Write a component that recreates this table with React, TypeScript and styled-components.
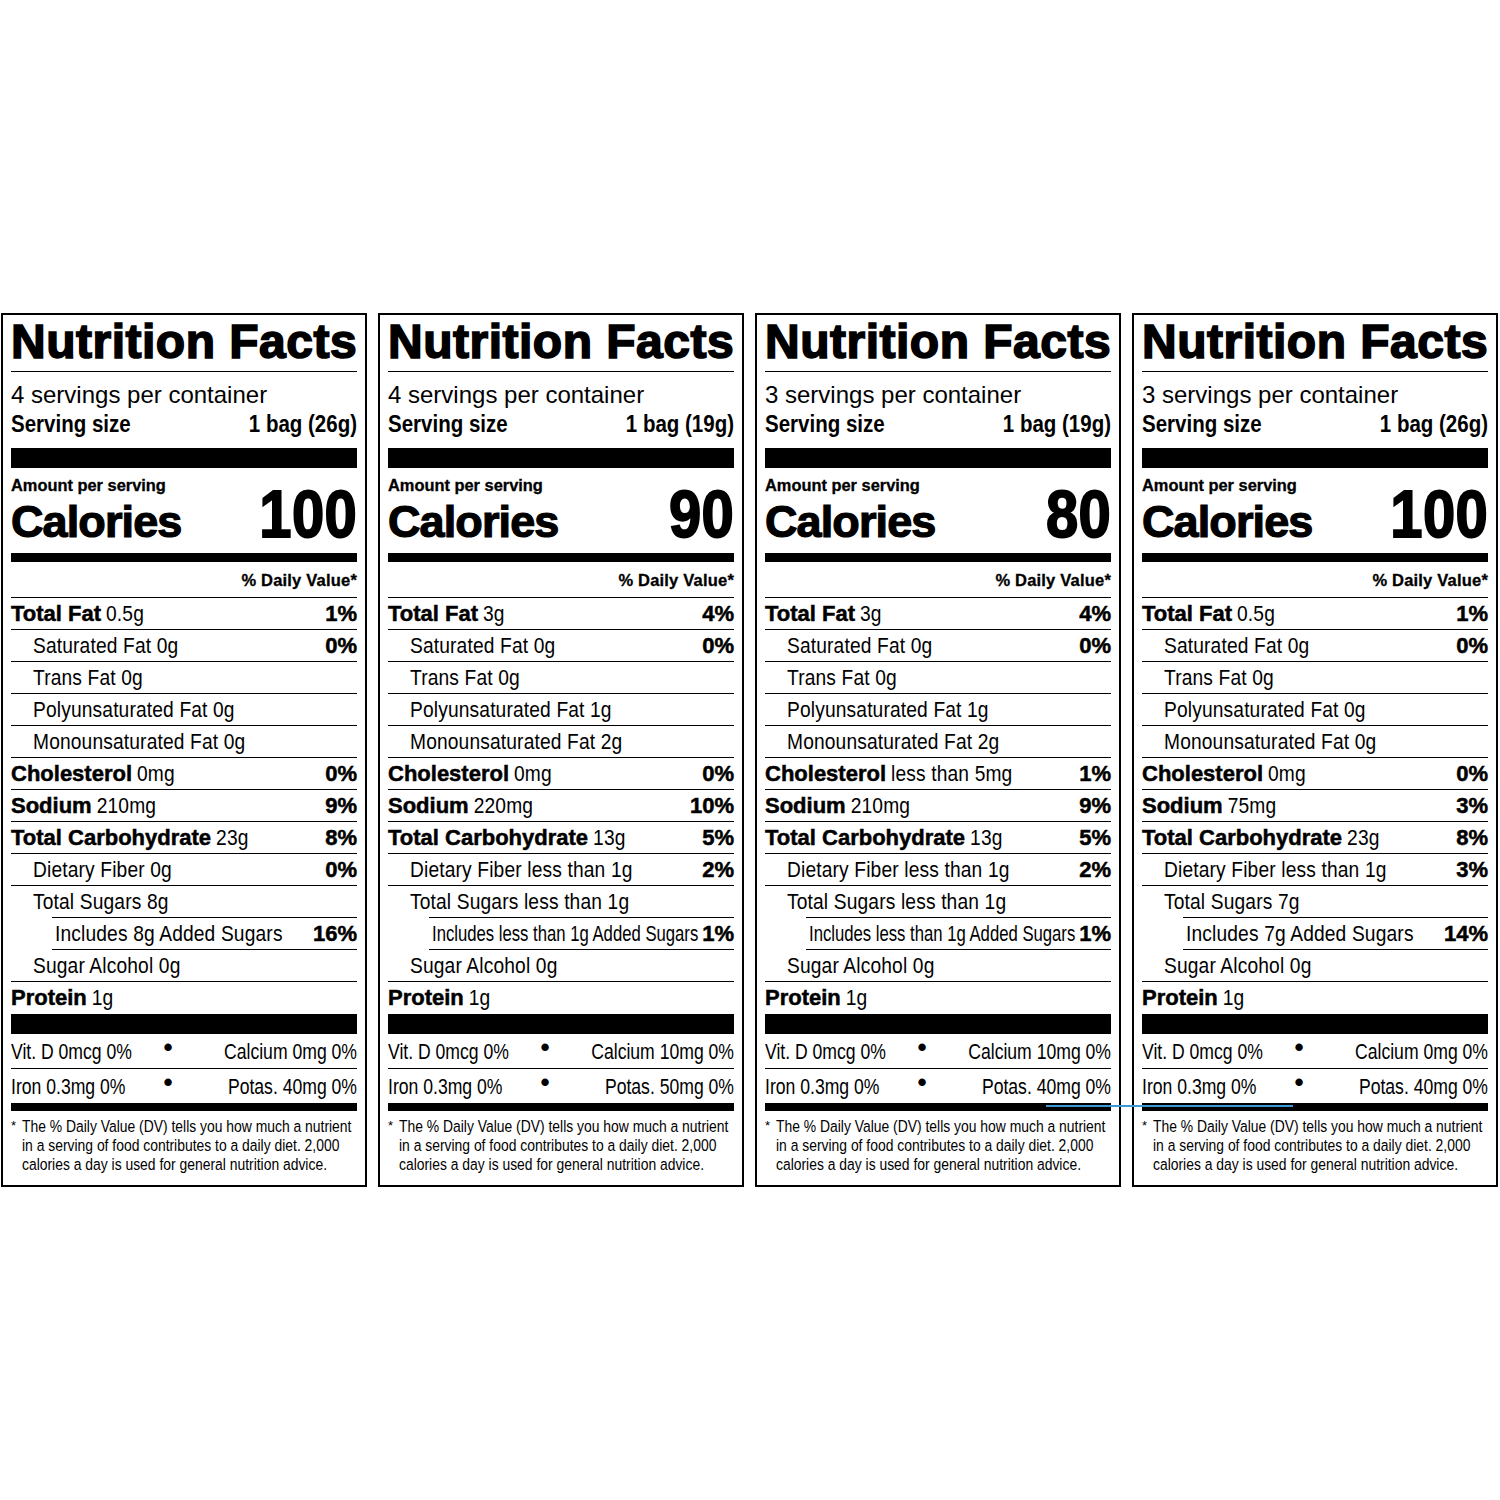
import React from "react";
import styled, { createGlobalStyle, css } from "styled-components";

const SANS = `"Liberation Sans", Arial, Helvetica, sans-serif`;

const GlobalStyle = createGlobalStyle`
  html, body { margin: 0; padding: 0; background: #fff; }
  body { font-family: ${SANS}; color: #000; }
`;

/* Condensed look: Liberation Sans at a size that gives the reference widths,
   stretched vertically around its baseline to the reference cap height. */
const tall = (scale: number) => css`
  display: inline-block;
  line-height: 1;
  transform: scaleY(${scale});
  transform-origin: 0 84.65%;
`;

const Page = styled.main`
  min-height: 1500px;
  display: flex;
  align-items: center;
`;

const Strip = styled.div`
  position: relative;
  display: flex;
  gap: 11px;
  padding-left: 1px;
`;

const Label = styled.section`
  width: 366px;
  box-sizing: border-box;
  border: 2px solid #000;
  padding: 0 8px;
  display: flex;
  flex-direction: column;
`;

const Title = styled.h1`
  margin: 0;
  padding: 1px 0 3px;
  font: 700 48px/52px ${SANS};
  letter-spacing: 0.5px;
  -webkit-text-stroke: 1.6px #000;
  white-space: nowrap;
  border-bottom: 1px solid #000;
`;

const Servings = styled.div`
  padding-top: 9px;
  font: 400 24px/28px ${SANS};
  white-space: nowrap;
`;

const ServingSize = styled.div`
  margin-top: 3px;
  height: 28px;
  display: flex;
  justify-content: space-between;
  align-items: center;
  white-space: nowrap;
`;

const ServingText = styled.span`
  font: 700 20.5px ${SANS};
  ${tall(1.17)};
`;

const Bar = styled.div<{ $h: number; $mt?: number }>`
  height: ${(p) => p.$h}px;
  margin-top: ${(p) => p.$mt ?? 0}px;
  background: #000;
`;

const CalBlock = styled.div`
  padding-top: 8px;
  display: flex;
  justify-content: space-between;
  align-items: last baseline;
`;

const CalLeft = styled.div`
  display: flex;
  flex-direction: column;
`;

const Amount = styled.div`
  font: 700 16.4px/18px ${SANS};
  -webkit-text-stroke: 0.3px #000;
`;

const Calories = styled.div`
  margin-top: 6px;
  font: 700 45px/44px ${SANS};
  letter-spacing: -0.9px;
  -webkit-text-stroke: 1.2px #000;
`;

const CalNum = styled.div`
  font: 700 58px/52px ${SANS};
  letter-spacing: 0.3px;
  -webkit-text-stroke: 1.6px #000;
  transform: scaleY(1.15);
  transform-origin: 100% 46px;
`;

const DVHeader = styled.div`
  padding: 8px 0 7px;
  text-align: right;
  font: 700 16.5px/20px ${SANS};
  letter-spacing: 0.2px;
  -webkit-text-stroke: 0.3px #000;
  border-bottom: 1px solid #000;
`;

type Kind = "main" | "sub" | "sugars" | "added" | "protein";

const Row = styled.div<{ $kind: Kind }>`
  display: flex;
  justify-content: space-between;
  align-items: baseline;
  height: 31px;
  line-height: 31px;
  white-space: nowrap;
  padding-left: ${(p) => (p.$kind === "sub" || p.$kind === "sugars" ? 22 : p.$kind === "added" ? 3 : 0)}px;
  margin-left: ${(p) => (p.$kind === "added" ? 41 : 0)}px;
  border-top: ${(p) => (p.$kind === "added" ? "1px solid #000" : "none")};
  border-bottom: ${(p) => (p.$kind === "sugars" || p.$kind === "protein" ? "none" : "1px solid #000")};
  padding-bottom: ${(p) => (p.$kind === "protein" ? 1 : 0)}px;
`;

const RowText = styled.span`
  font: 700 22px/31px ${SANS};
`;

const RowLabel = styled.span`
  margin-right: 5px;
  -webkit-text-stroke: 0.5px #000;
`;

const RowValue = styled.span<{ $tight?: boolean }>`
  font: 400 ${(p) => (p.$tight ? 16.7 : 19.2)}px ${SANS};
  letter-spacing: ${(p) => (p.$tight ? 0 : 0.15)}px;
  ${(p) => tall(p.$tight ? 1.3 : 1.15)};
`;

const RowPct = styled.span`
  padding-left: 4px;
  font: 700 22px/31px ${SANS};
  -webkit-text-stroke: 0.5px #000;
`;

const VitRow = styled.div<{ $rule?: boolean }>`
  display: grid;
  grid-template-columns: 1fr auto 1fr;
  align-items: baseline;
  height: 34px;
  white-space: nowrap;
  border-bottom: ${(p) => (p.$rule ? "1px solid #000" : "none")};
`;

const VitText = styled.span<{ $end?: boolean }>`
  justify-self: ${(p) => (p.$end ? "end" : "start")};
  font: 400 17.6px ${SANS};
  ${tall(1.3)};
`;

const Bullet = styled.span`
  margin-right: 32px;
  font: 700 26px/32px ${SANS};
  transform: translateY(-3px);
`;

const Footnote = styled.div`
  padding: 6px 0 20px;
  display: flex;
  align-items: flex-start;
`;

const Star = styled.span`
  flex: 0 0 11px;
  font: 400 13px/17px ${SANS};
`;

const FootText = styled.p`
  margin: 0;
  white-space: nowrap;
  font: 400 13.9px/16.24px ${SANS};
  transform: scaleY(1.17);
  transform-origin: 0 0;
`;

const Glitch = styled.div`
  position: absolute;
  left: 1046px;
  top: 792px;
  width: 247px;
  height: 2px;
  background: #3a98d4;
`;

type Nutrient = {
  kind: Kind;
  label?: string;
  value: string;
  pct?: string;
  tight?: boolean;
};

type Facts = {
  servings: string;
  size: string;
  calories: string;
  rows: Nutrient[];
  vitD: string;
  calcium: string;
  iron: string;
  potas: string;
};

const labels: Facts[] = [
  {
    servings: "4 servings per container",
    size: "1 bag (26g)",
    calories: "100",
    rows: [
      { kind: "main", label: "Total Fat", value: "0.5g", pct: "1%" },
      { kind: "sub", value: "Saturated Fat 0g", pct: "0%" },
      { kind: "sub", value: "Trans Fat 0g" },
      { kind: "sub", value: "Polyunsaturated Fat 0g" },
      { kind: "sub", value: "Monounsaturated Fat 0g" },
      { kind: "main", label: "Cholesterol", value: "0mg", pct: "0%" },
      { kind: "main", label: "Sodium", value: "210mg", pct: "9%" },
      { kind: "main", label: "Total Carbohydrate", value: "23g", pct: "8%" },
      { kind: "sub", value: "Dietary Fiber 0g", pct: "0%" },
      { kind: "sugars", value: "Total Sugars 8g" },
      { kind: "added", value: "Includes 8g Added Sugars", pct: "16%" },
      { kind: "sub", value: "Sugar Alcohol 0g" },
      { kind: "protein", label: "Protein", value: "1g" },
    ],
    vitD: "Vit. D 0mcg 0%",
    calcium: "Calcium 0mg 0%",
    iron: "Iron 0.3mg 0%",
    potas: "Potas. 40mg 0%",
  },
  {
    servings: "4 servings per container",
    size: "1 bag (19g)",
    calories: "90",
    rows: [
      { kind: "main", label: "Total Fat", value: "3g", pct: "4%" },
      { kind: "sub", value: "Saturated Fat 0g", pct: "0%" },
      { kind: "sub", value: "Trans Fat 0g" },
      { kind: "sub", value: "Polyunsaturated Fat 1g" },
      { kind: "sub", value: "Monounsaturated Fat 2g" },
      { kind: "main", label: "Cholesterol", value: "0mg", pct: "0%" },
      { kind: "main", label: "Sodium", value: "220mg", pct: "10%" },
      { kind: "main", label: "Total Carbohydrate", value: "13g", pct: "5%" },
      { kind: "sub", value: "Dietary Fiber less than 1g", pct: "2%" },
      { kind: "sugars", value: "Total Sugars less than 1g" },
      { kind: "added", value: "Includes less than 1g Added Sugars", pct: "1%", tight: true },
      { kind: "sub", value: "Sugar Alcohol 0g" },
      { kind: "protein", label: "Protein", value: "1g" },
    ],
    vitD: "Vit. D 0mcg 0%",
    calcium: "Calcium 10mg 0%",
    iron: "Iron 0.3mg 0%",
    potas: "Potas. 50mg 0%",
  },
  {
    servings: "3 servings per container",
    size: "1 bag (19g)",
    calories: "80",
    rows: [
      { kind: "main", label: "Total Fat", value: "3g", pct: "4%" },
      { kind: "sub", value: "Saturated Fat 0g", pct: "0%" },
      { kind: "sub", value: "Trans Fat 0g" },
      { kind: "sub", value: "Polyunsaturated Fat 1g" },
      { kind: "sub", value: "Monounsaturated Fat 2g" },
      { kind: "main", label: "Cholesterol", value: "less than 5mg", pct: "1%" },
      { kind: "main", label: "Sodium", value: "210mg", pct: "9%" },
      { kind: "main", label: "Total Carbohydrate", value: "13g", pct: "5%" },
      { kind: "sub", value: "Dietary Fiber less than 1g", pct: "2%" },
      { kind: "sugars", value: "Total Sugars less than 1g" },
      { kind: "added", value: "Includes less than 1g Added Sugars", pct: "1%", tight: true },
      { kind: "sub", value: "Sugar Alcohol 0g" },
      { kind: "protein", label: "Protein", value: "1g" },
    ],
    vitD: "Vit. D 0mcg 0%",
    calcium: "Calcium 10mg 0%",
    iron: "Iron 0.3mg 0%",
    potas: "Potas. 40mg 0%",
  },
  {
    servings: "3 servings per container",
    size: "1 bag (26g)",
    calories: "100",
    rows: [
      { kind: "main", label: "Total Fat", value: "0.5g", pct: "1%" },
      { kind: "sub", value: "Saturated Fat 0g", pct: "0%" },
      { kind: "sub", value: "Trans Fat 0g" },
      { kind: "sub", value: "Polyunsaturated Fat 0g" },
      { kind: "sub", value: "Monounsaturated Fat 0g" },
      { kind: "main", label: "Cholesterol", value: "0mg", pct: "0%" },
      { kind: "main", label: "Sodium", value: "75mg", pct: "3%" },
      { kind: "main", label: "Total Carbohydrate", value: "23g", pct: "8%" },
      { kind: "sub", value: "Dietary Fiber less than 1g", pct: "3%" },
      { kind: "sugars", value: "Total Sugars 7g" },
      { kind: "added", value: "Includes 7g Added Sugars", pct: "14%" },
      { kind: "sub", value: "Sugar Alcohol 0g" },
      { kind: "protein", label: "Protein", value: "1g" },
    ],
    vitD: "Vit. D 0mcg 0%",
    calcium: "Calcium 0mg 0%",
    iron: "Iron 0.3mg 0%",
    potas: "Potas. 40mg 0%",
  },
];

function NutritionLabel({ f }: { f: Facts }) {
  return (
    <Label>
      <Title>Nutrition Facts</Title>
      <Servings>{f.servings}</Servings>
      <ServingSize>
        <ServingText>Serving size</ServingText>
        <ServingText>{f.size}</ServingText>
      </ServingSize>
      <Bar $h={20} $mt={8} />
      <CalBlock>
        <CalLeft>
          <Amount>Amount per serving</Amount>
          <Calories>Calories</Calories>
        </CalLeft>
        <CalNum>{f.calories}</CalNum>
      </CalBlock>
      <Bar $h={9} $mt={9} />
      <DVHeader>% Daily Value*</DVHeader>
      {f.rows.map((r, i) => (
        <Row key={i} $kind={r.kind}>
          <RowText>
            {r.label && <RowLabel>{r.label}</RowLabel>}
            <RowValue $tight={r.tight}>{r.value}</RowValue>
          </RowText>
          {r.pct && <RowPct>{r.pct}</RowPct>}
        </Row>
      ))}
      <Bar $h={20} />
      <VitRow $rule>
        <VitText>{f.vitD}</VitText>
        <Bullet>•</Bullet>
        <VitText $end>{f.calcium}</VitText>
      </VitRow>
      <VitRow>
        <VitText>{f.iron}</VitText>
        <Bullet>•</Bullet>
        <VitText $end>{f.potas}</VitText>
      </VitRow>
      <Bar $h={8} />
      <Footnote>
        <Star>*</Star>
        <FootText>
          The % Daily Value (DV) tells you how much a nutrient
          <br />
          in a serving of food contributes to a daily diet. 2,000
          <br />
          calories a day is used for general nutrition advice.
        </FootText>
      </Footnote>
    </Label>
  );
}

export default function App() {
  return (
    <>
      <GlobalStyle />
      <Page>
        <Strip>
          {labels.map((f, i) => (
            <NutritionLabel key={i} f={f} />
          ))}
          <Glitch />
        </Strip>
      </Page>
    </>
  );
}
